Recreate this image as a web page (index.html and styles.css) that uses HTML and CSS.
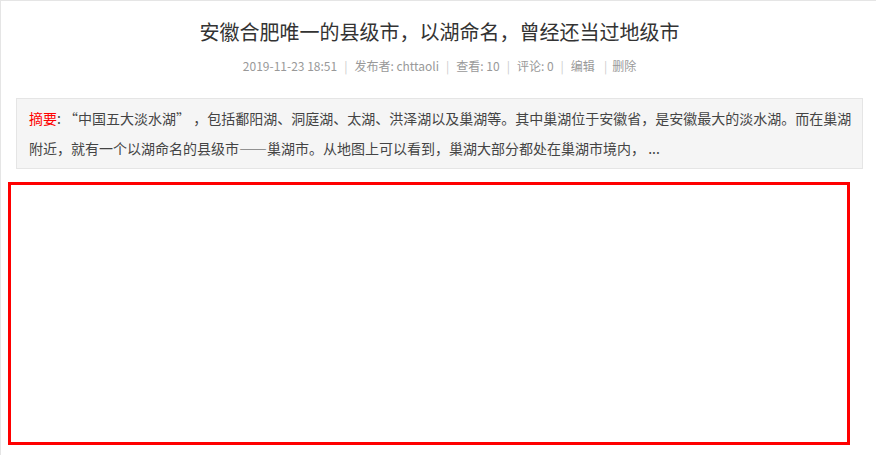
FILE: index.html
```html
<!DOCTYPE html>
<html lang="zh-CN">
<head>
<meta charset="utf-8">
<title>安徽合肥唯一的县级市，以湖命名，曾经还当过地级市</title>
<link rel="stylesheet" href="styles.css">
</head>
<body>
<div class="page">
  <h1 class="title">安徽合肥唯一的县级市，以湖命名，曾经还当过地级市</h1>
  <div class="meta">
    <span>2019-11-23 18:51</span><span class="sep">|</span><span>发布者: chttaoli</span><span class="sep">|</span><span>查看: 10</span><span class="sep">|</span><span>评论: 0</span><span class="sep">|</span><a class="link">编辑</a><span class="sep sep-tight">|</span><a class="link">删除</a>
  </div>
  <div class="summary">
    <span class="summary-label">摘要</span>: “中国五大淡水湖” ，包括鄱阳湖、洞庭湖、太湖、洪泽湖以及巢湖等。其中巢湖位于安徽省，是安徽最大的淡水湖。而在巢湖<br>附近，就有一个以湖命名的县级市——巢湖市。从地图上可以看到，巢湖大部分都处在巢湖市境内， ...
  </div>
  <div class="frame"></div>
</div>
</body>
</html>
```
FILE: styles.css
```css
html, body {
  margin: 0;
  padding: 0;
  overflow: hidden;
  background: #fff;
}

body {
  font-family: "Microsoft YaHei", "Noto Sans CJK SC", sans-serif;
  color: #333;
}

.page {
  width: 877px;
  height: 470px;
  border-top: 1px solid #e5e5e5;
  border-left: 1px solid #e5e5e5;
}

.title {
  margin: 0;
  padding-top: 17px;
  font-size: 20px;
  line-height: 28px;
  font-weight: normal;
  text-align: center;
  color: #333;
}

.meta {
  margin-top: 10px;
  font-size: 12px;
  line-height: 20px;
  color: #999;
  text-align: center;
}

.sep {
  color: #ccc;
  margin: 0 7px;
}

.sep-tight {
  margin: 0 5px 0 9px;
}

.link {
  color: #999;
  text-decoration: none;
}

.summary {
  margin: 22px 15px 0;
  padding: 4px 0 5px 12px;
  border: 1px solid #e5e5e5;
  background: #f5f5f5;
  font-size: 14px;
  line-height: 30px;
  color: #444;
  white-space: nowrap;
  overflow: hidden;
}

.summary-label {
  color: #f00;
}

.frame {
  margin: 13px 0 0 7px;
  width: 836px;
  height: 257px;
  border: 3px solid #f00;
}
```
